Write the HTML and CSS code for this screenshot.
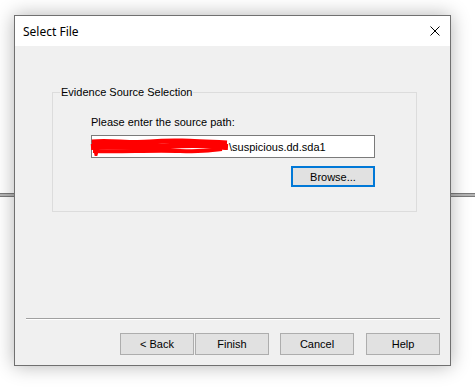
FILE: index.html
```html
<!DOCTYPE html>
<html lang="en">
<head>
    <meta charset="UTF-8">
    <title>Select File</title>
    <link rel="stylesheet" href="styles.css">
</head>
<body>
    <div class="window">
        <div class="title-bar">
            <span class="title">Select File</span>
            <svg class="close" width="10" height="10" viewBox="0 0 10 10">
                <path d="M0.5 0.5 L9.5 9.5 M9.5 0.5 L0.5 9.5" stroke="#000" stroke-width="1" fill="none"/>
            </svg>
        </div>
        <div class="content">
            <div class="group">
                <span class="legend">Evidence Source Selection</span>
                <div class="label">Please enter the source path:</div>
                <div class="path-box">
                    <!-- redacted part of the path -->
                    <svg class="scribble" width="140" height="18" viewBox="0 0 140 18">
                        <path d="M2 4 C20 2, 40 6, 60 4 S100 3, 137 5" stroke="#f00" stroke-width="5" fill="none"/>
                        <path d="M1 9 C25 7, 50 11, 80 8 S120 8, 138 9" stroke="#f00" stroke-width="6" fill="none"/>
                        <path d="M3 13 C30 14, 60 12, 90 13 S118 12, 132 11" stroke="#f00" stroke-width="4" fill="none"/>
                        <path d="M3 3 L6 17 L10 4" stroke="#f00" stroke-width="3" fill="none"/>
                    </svg>
                    <span class="path-text">\suspicious.dd.sda1</span>
                </div>
                <div class="browse-row">
                    <button class="btn browse">Browse...</button>
                </div>
            </div>
            <div class="separator"></div>
            <div class="buttons">
                <button class="btn">&lt; Back</button>
                <button class="btn finish">Finish</button>
                <button class="btn cancel">Cancel</button>
                <button class="btn help">Help</button>
            </div>
        </div>
    </div>
</body>
</html>
```

FILE: styles.css
```css
body {
    margin: 0;
    padding: 15px 0 0 14px;
    height: 390px;
    box-sizing: border-box;
    overflow: hidden;
    font-family: "Liberation Sans", Arial, sans-serif;
    font-size: 11px;
    color: #000;
    background: linear-gradient(to bottom,
        #fff 193px, #7a7a7a 193px, #7a7a7a 194px,
        #b4b4b4 194px, #b4b4b4 196px, #7a7a7a 196px,
        #7a7a7a 197px, #fff 197px);
}
.window {
    width: 437px;
    height: 351px;
    box-sizing: border-box;
    border: 1px solid #707070;
    background-color: #f0f0f0;
    box-shadow: 0 0 18px rgba(0,0,0,0.3);
    display: flex;
    flex-direction: column;
}
.title-bar {
    height: 30px;
    background-color: #fff;
    display: flex;
    align-items: center;
    justify-content: space-between;
    padding: 0 10px 0 8px;
}
.title {
    font-family: "Noto Sans", sans-serif;
    font-size: 12px;
}
.close {
    margin-top: -1px;
}
.content {
    flex: 1;
}
.group {
    margin: 46px 0 0 37px;
    width: 365px;
    height: 120px;
    box-sizing: border-box;
    border: 1px solid #dcdcdc;
    padding-left: 38px;
}
.legend {
    display: table;
    margin: -7px 0 0 -31px;
    padding: 0 1px;
    line-height: 13px;
    background-color: #f0f0f0;
}
.label {
    margin-top: 17px;
    line-height: 13px;
}
.path-box {
    margin-top: 6px;
    width: 284px;
    height: 23px;
    box-sizing: border-box;
    border: 1px solid #7a7a7a;
    background-color: #fff;
    display: flex;
    align-items: center;
    overflow: visible;
}
.scribble {
    margin-left: -2px;
    flex-shrink: 0;
}
.path-text {
    margin-left: -1px;
}
.browse-row {
    width: 284px;
    display: flex;
    justify-content: flex-end;
    margin-top: 8px;
}
.btn {
    width: 74px;
    height: 22px;
    border: 1px solid #adadad;
    background-color: #e1e1e1;
    font-family: "Liberation Sans", Arial, sans-serif;
    font-size: 11px;
    color: #000;
    padding: 0;
}
.browse {
    width: 84px;
    height: 21px;
    border: 2px solid #0078d7;
}
.separator {
    margin: 106px 0 0 11px;
    width: 414px;
    height: 1px;
    border-top: 1px solid #a0a0a0;
    background-color: #fff;
}
.buttons {
    margin: 13px 0 0 105px;
    display: flex;
}
.finish {
    margin-left: 1px;
}
.cancel {
    margin-left: 11px;
}
.help {
    margin-left: 12px;
}
```
